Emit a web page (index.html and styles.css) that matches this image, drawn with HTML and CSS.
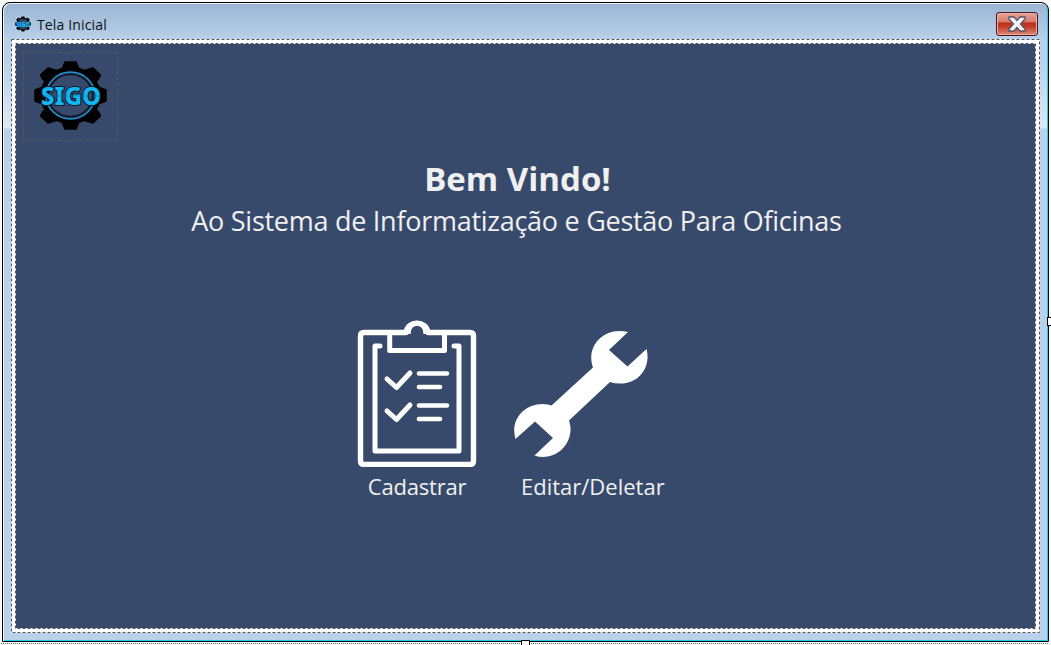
FILE: index.html
```html
<!DOCTYPE html>
<html lang="pt-BR">
<head>
<meta charset="utf-8">
<title>Tela Inicial</title>
<link rel="stylesheet" href="styles.css">
</head>
<body>
<svg class="defs" width="0" height="0" aria-hidden="true">
  <symbol id="gear" viewBox="0 0 73 69">
    <g fill="#000" stroke="#000" stroke-width="1.5" stroke-linejoin="round">
      <ellipse cx="36.5" cy="34.500" rx="29.500" ry="28"/>
      <path d="M28 8L31 1H42L45 8V61L42 68H31L28 61Z"/>
      <path d="M9 26L1 29V40L9 43H64L72 40V29L64 26Z"/>
      <path d="M8.500 18L6.500 14L14 7L24 10L64.500 51L66.500 55L59 62L49 59Z"/>
      <path d="M64.500 18L66.500 14L59 7L49 10L8.500 51L6.500 55L14 62L24 59Z"/>
    </g>
    <ellipse cx="36.5" cy="34.5" rx="24.500" ry="23.500" fill="#374a6c" stroke="#1c93d1" stroke-width="1.4"/>
    <ellipse cx="36.5" cy="34.5" rx="22.3" ry="21.3" fill="none" stroke="#101a28" stroke-width="2"/>
  </symbol>
</svg>
<main class="window">
  <header class="titlebar">
    <svg class="app-icon" viewBox="0 0 16 16"><use href="#gear" width="16" height="16"/><text x="1" y="10.500" class="icon-text" textLength="14" lengthAdjust="spacingAndGlyphs">SIGO</text></svg>
    <h1 class="caption">Tela Inicial</h1>
    <button class="close" aria-label="Fechar">
      <svg width="24" height="18" viewBox="0 0 24 18"><path d="M4 2H9L12 5.5L15 2H20V4L15.5 9L20 14V16H15L12 12.5L9 16H4V14L8.500 9L4 4Z" fill="#f4f4f4" stroke="#535666" stroke-width="1.3"/></svg>
    </button>
  </header>
  <section class="client">
    <div class="logo"><svg width="73" height="69"><use href="#gear"/><text x="7" y="44" class="gear-text" textLength="60" lengthAdjust="spacingAndGlyphs">SIGO</text><path d="M8 35H66" stroke="#126b95" stroke-width=".6"/></svg></div>
    <h2 class="welcome">Bem Vindo!</h2>
    <p class="subtitle">Ao Sistema de Informatização e Gestão Para Oficinas</p>
    <nav class="actions">
      <a class="action register">
        <svg width="120" height="147" viewBox="357 320 120 147" fill="none" stroke="#fff" stroke-linecap="round" stroke-linejoin="round">
          <path d="M406 332.500H364Q360.500 332.500 360.500 336V460.500Q360.500 464.500 364 464.500H470Q473.500 464.500 473.500 460.500V336Q473.500 332.500 470 332.500H428C426 320 408 320 406 332.500Z" stroke-width="5.400"/>
          <path d="M408.500 332.500H425.500" stroke="#374a6c" stroke-width="6" stroke-linecap="butt"/>
          <path d="M408 334C408 319.500 426 319.500 426 334" stroke-width="5" stroke-linecap="butt"/>
          <path d="M389.700 334V350.500H444.500V334" stroke-width="5"/>
          <path d="M380 346H375V451H459V346H454" stroke-width="5"/>
          <path d="M387 379L396.500 387.500L410 373M387 411L396.500 419.500L410 405" stroke-width="5"/>
          <path d="M419 373.500H447M419 387H440M419 405.500H447M419 419H440" stroke-width="4.700"/>
        </svg>
        <span class="label">Cadastrar</span>
      </a>
      <a class="action edit">
        <svg width="136" height="128" viewBox="513 330 136 128"><path fill="#fff" d="M628 332L609 350L627.500 366.500L646.500 349C651 365 641 383.500 620 383.500Q614 383.500 610 382L569 420.500C575 437 563 457 543 457Q539 457 534.500 455.500L553 438L535 421.500L515.500 439C510 421 523 404 543 404Q548 404 551.500 405.500L593 367.500C586 348 601 331 619 331Q624 331 628 332Z"/></svg>
        <span class="label">Editar/Deletar</span>
      </a>
    </nav>
    <svg class="frame" width="1029" height="594" fill="none">
      <rect x="2.500" y="2.500" width="1024" height="589" stroke="#fff" stroke-width="5"/>
      <rect x=".5" y=".5" width="1028" height="593" stroke="#555" stroke-dasharray="3 2"/>
      <rect x="4.500" y="4.500" width="1020" height="585" stroke="#555" stroke-dasharray="3 2"/>
    </svg>
  </section>
</main>
<i class="guide"></i>
<i class="handle handle-right"></i>
<i class="handle handle-bottom"></i>
</body>
</html>
```
FILE: styles.css
```css
* { box-sizing: border-box; }
body { margin: 0; height: 645px; padding: 2px 0 0 2px; background: #fafafa; overflow: hidden; position: relative; font-family: "Open Sans", "Noto Sans", sans-serif; }
.defs { position: absolute; }
.window { width: 1047px; height: 640px; padding: 0 8px; border: 1px solid #000; border-radius: 8px 8px 0 0; background: linear-gradient(#9ab5d3 0, #b9d1ea 38px, #b9d1ea 60px, #dce9f5 125px, #b9d1ea 126px); box-shadow: inset 1px 1px #eef6fc, inset -1px -1px #22cde9; }
.titlebar { height: 36px; display: flex; align-items: center; padding: 7px 2px 0 4px; }
.app-icon { width: 16px; height: 16px; margin-top: -2px; }
.icon-text { font: 800 6px "Open Sans", sans-serif; fill: #10b9f5; }
.caption { margin: 0 auto 0 6px; font-size: 14px; font-weight: 400; line-height: 20px; letter-spacing: .15px; color: #111; }
.close { width: 42px; height: 24px; padding: 0; margin-top: -2px; display: flex; align-items: center; justify-content: center; border: 1px solid #4b1723; border-radius: 3px; background: linear-gradient(#e6a399, #d67a6c 42%, #b92f19 44%, #c4412d 65%, #dc8d77); box-shadow: inset 0 0 0 1px #e8afa5; }
.client { position: relative; width: 1029px; height: 594px; background: #374a6c; display: flex; flex-direction: column; align-items: center; padding-top: 13px; }
.frame { position: absolute; inset: 0; }
.logo { width: 95px; height: 89px; align-self: flex-start; margin-left: 12px; padding: 8px 0 0 10px; border: 1px dashed #50596c; }
.gear-text { font: 800 25px "Noto Sans", sans-serif; fill: #10b9f5; stroke: #0b1726; stroke-width: 2px; paint-order: stroke; }
.welcome, .subtitle, .label { color: #f0f0f0; white-space: nowrap; }
.welcome { margin: 15px 0 0 -16px; font-size: 33px; line-height: 46px; font-weight: 700; }
.subtitle { margin: -1px 0 0 -18px; font-size: 27px; line-height: 40px; font-weight: 400; letter-spacing: -.27px; }
.actions { align-self: flex-start; height: 183px; margin: 79px 0 0 346px; display: flex; gap: 36px; align-items: flex-end; }
.action { display: flex; flex-direction: column; align-items: center; }
.action svg { display: block; }
.register { width: 120px; }
.edit { align-items: flex-start; }
.edit svg { margin-bottom: 9px; }
.edit .label { margin-left: 8px; }
.label { font-size: 22px; line-height: 36px; height: 36px; position: relative; top: 1px; }
.register .label { letter-spacing: -.2px; }
.guide { position: absolute; left: 1px; bottom: 1px; width: 1048px; height: 1px; background: repeating-linear-gradient(90deg, #777 0 1px, #fff 1px 2px); }
.handle { position: absolute; background: #fff; border: 1px solid #000; }
.handle-right { left: 1047px; top: 317px; width: 8px; height: 9px; }
.handle-bottom { left: 521px; top: 640px; width: 9px; height: 8px; }
```
